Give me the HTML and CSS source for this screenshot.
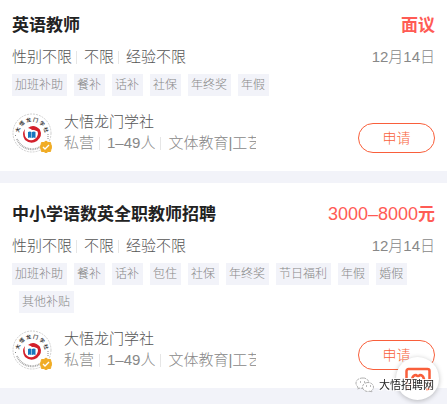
FILE: index.html
```html
<!DOCTYPE html>
<html lang="zh-CN">
<head>
<meta charset="utf-8">
<meta name="viewport" content="width=device-width, initial-scale=1">
<title>大悟招聘网</title>
<link rel="stylesheet" href="styles.css">
</head>
<body>
<svg class="defs" aria-hidden="true">
  <defs><path id="arc" d="M7.500 25A13 13 0 1 1 32.500 25"/></defs>
  <symbol id="logo" viewBox="0 0 40 40">
    <circle cx="20" cy="20" r="19" fill="#fff" stroke="#bbb" stroke-width=".7" stroke-dasharray="2 1"/>
    <path d="M5 26A16 16 0 0 0 28 34" fill="none" stroke="#aaa" stroke-width="2" stroke-dasharray="1 .7"/>
    <path d="M3.500 22v2M36 21v6" stroke="#888" stroke-dasharray="1 1"/>
    <path d="M13 16Q9 21 13 27Q19 32 25 28Q31 23 28 17Q24 12 18 15L20 17Q25 16 26 20Q26 25 21 27Q15 28 13 23Q12 19 13 16Z" fill="#d3202b"/>
    <path d="M16 15Q22 10 28 17L25 18Z" fill="#d3202b"/>
    <path d="M16 19q2-1 3.500 0v6q-2-1-3.500 0zM20 19q2-1 3.500 0v6q-2-1-3.500 0z" fill="#1876bd"/>
  </symbol>
  <symbol id="badge" viewBox="0 0 40 40">
    <path d="M34 28l2 1.500 2.500 0 .5 2.500 1 2-1 2-.5 2.500-2.500 0-2 1.500-2-1.500-2.500 0-.5-2.500-1-2 1-2 .5-2.500 2.500 0z" fill="#f0ac25" stroke="#f0ac25"/>
    <path d="M31 34l2 2 4-4" fill="none" stroke="#fff" stroke-width="1.300"/>
  </symbol>
</svg>
<main class="jobs">
  <article class="job">
    <div class="line title-line"><h2 class="title">英语教师</h2><span class="pay">面议</span></div>
    <div class="line sub-line"><div class="needs"><span>性别不限</span><span>不限</span><span>经验不限</span></div><time class="date">12月14日</time></div>
    <ul class="tags"><li>加班补助</li><li>餐补</li><li>话补</li><li>社保</li><li>年终奖</li><li>年假</li></ul>
    <div class="company">
      <svg class="logo" viewBox="0 0 40 40"><use href="#logo"/><text class="seal"><textPath href="#arc" startOffset="50%">大 悟 龙 门 学 社</textPath></text><use href="#badge"/></svg>
      <div class="about"><div class="name">大悟龙门学社</div><div class="info"><span>私营</span><span>1–49人</span><span>文体教育|工艺</span></div></div>
      <button class="apply" type="button">申请</button>
    </div>
  </article>
  <article class="job">
    <div class="line title-line"><h2 class="title">中小学语数英全职教师招聘</h2><span class="pay"><span class="amount">3000–8000</span>元</span></div>
    <div class="line sub-line"><div class="needs"><span>性别不限</span><span>不限</span><span>经验不限</span></div><time class="date">12月14日</time></div>
    <ul class="tags"><li>加班补助</li><li>餐补</li><li>话补</li><li>包住</li><li>社保</li><li>年终奖</li><li>节日福利</li><li>年假</li><li>婚假</li><li>其他补贴</li></ul>
    <div class="company">
      <svg class="logo" viewBox="0 0 40 40"><use href="#logo"/><text class="seal"><textPath href="#arc" startOffset="50%">大 悟 龙 门 学 社</textPath></text><use href="#badge"/></svg>
      <div class="about"><div class="name">大悟龙门学社</div><div class="info"><span>私营</span><span>1–49人</span><span>文体教育|工艺</span></div></div>
      <button class="apply" type="button">申请</button>
    </div>
  </article>
</main>
<button class="float" type="button" aria-label="红包">
  <svg viewBox="0 0 26 24"><path d="M5 22H3.500a2 2 0 0 1-2-2V4a2 2 0 0 1 2-2h19a2 2 0 0 1 2 2v16a2 2 0 0 1-2 2H21M7 19v-7q1-4 4-4 2 2 4 0 3 0 4 4v7" fill="none" stroke="#f95f3b" stroke-width="2.500" stroke-linejoin="round"/></svg>
</button>
<div class="mark">
  <svg class="wechat" viewBox="0 0 20 16" aria-hidden="true"><g fill="#fff" stroke="#999" stroke-width=".8" stroke-dasharray="3 1"><path d="M8 1C4 1 1 3 1 6q0 2.500 2 4l-.5 2L5 11q1 .4 3 .4 6-.4 6-5.400Q13 1 8 1Z"/><path d="M13 5.500c-3 0-5.500 2-5.500 4.500s2.500 4.500 5.500 4.500l2-.3 2 1-.5-1.500q2-1.500 2-3.700c0-2.500-2.500-4.500-5.500-4.500Z"/></g><path d="M5 5h1M9 5h1M11 9h1M15 9h1" stroke="#777"/></svg>
  <span>大悟招聘网</span>
</div>
</body>
</html>
```
FILE: styles.css
```css
* { box-sizing: border-box; }
body {
  margin: 0;
  background: #f2f3f9;
  color: #555;
  font: 300 15px/21px "Liberation Sans", "Noto Sans CJK SC", sans-serif;
}
.defs { position: absolute; width: 0; height: 0; }
.seal { font-size: 5px; font-weight: 700; fill: #333; text-anchor: middle; }
.jobs { display: flex; flex-direction: column; gap: 12px; }
.job { padding: 20px 12px 18px; background: #fff; }
.job:first-child { padding-top: 14px; }
.line { display: flex; justify-content: space-between; white-space: nowrap; }
.title-line { line-height: 24px; }
.title { margin: 0; font-size: 17px; font-weight: 700; color: #222; }
.pay { font-size: 17px; font-weight: 700; color: #ff5b55; }
.amount { font-size: 18px; font-weight: 400; line-height: 20px; }
.sub-line { margin-top: 8px; }
.date { color: #888; }
.needs, .info { display: flex; align-items: center; white-space: nowrap; }
.needs span + span::before, .info span + span::before {
  content: "";
  display: inline-block;
  width: 1px;
  height: 13px;
  margin: 0 7px 0 4px;
  background: #e6e6e6;
  vertical-align: -2px;
}
.info span + span::before { margin-left: 5px; }
.tags {
  display: flex;
  flex-wrap: wrap;
  row-gap: 6px;
  margin: 7px 0 15px;
  padding: 0;
  list-style: none;
  font-size: 12px;
  line-height: 22px;
  color: #888;
}
.tags li { padding: 0 4px 0 3px; background: #f2f3f9; }
.tags li + li { margin-left: 7px; }
.company { display: flex; align-items: flex-end; }
.logo { width: 40px; height: 40px; flex: none; overflow: visible; }
.about { width: 192px; margin: 0 auto 0 12px; overflow: hidden; }
.info { color: #888; }
.apply {
  width: 77px;
  height: 30px;
  padding: 0;
  border: 1px solid #f95f3b;
  border-radius: 15px;
  background: #fff;
  color: #f95f3b;
  font: inherit;
  font-size: 14px;
}
.float {
  position: fixed;
  right: 8px;
  bottom: 4px;
  display: grid;
  place-items: center;
  width: 43px;
  height: 43px;
  padding: 0;
  border: 0;
  border-radius: 50%;
  background: #fff;
  box-shadow: 0 1px 5px rgba(0, 0, 0, .25);
}
.float svg { width: 26px; height: 24px; }
.mark {
  position: fixed;
  right: 13px;
  bottom: 10px;
  display: flex;
  align-items: center;
  gap: 4px;
  font-size: 11px;
  line-height: 18px;
  font-weight: 400;
  color: #222;
  text-shadow: 1px 1px 0 #fff, -1px -1px 0 #fff, 1px -1px 0 #fff, -1px 1px 0 #fff;
}
.wechat { width: 20px; height: 16px; }
```
